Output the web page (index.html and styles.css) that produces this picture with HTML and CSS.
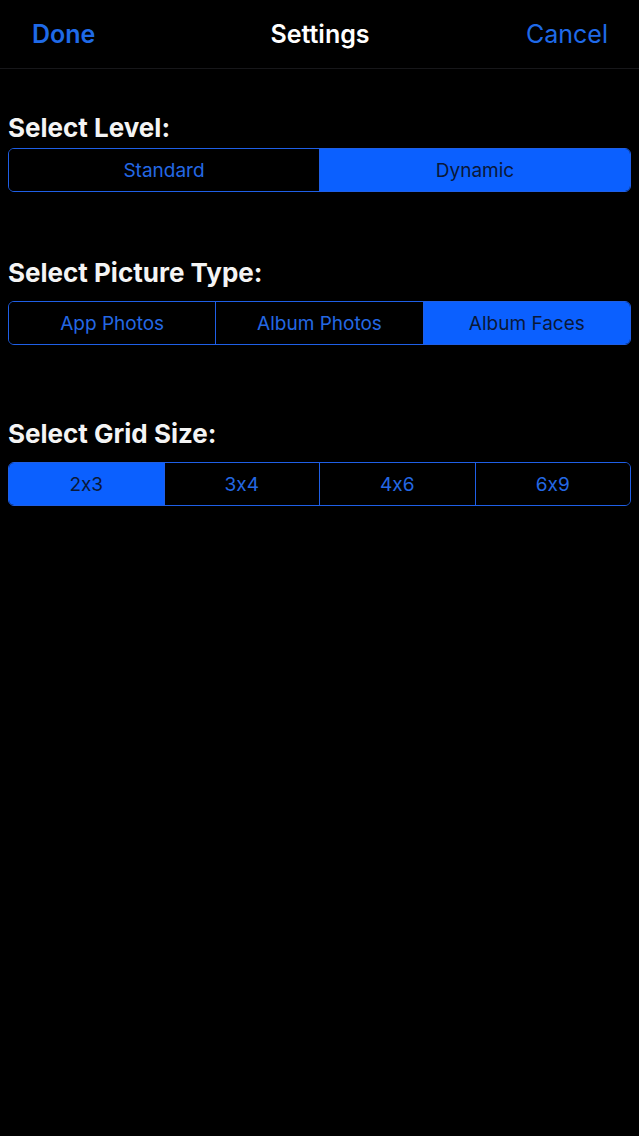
FILE: index.html
```html
<!doctype html>
<html lang="en">
 <head>
  <meta charset="UTF-8">
  <meta name="viewport" content="width=device-width, initial-scale=1.0">
  <title>Settings</title>
  <link rel="stylesheet" href="styles.css">
 </head>
 <body>
  <header class="navbar">
   <button class="nav-btn nav-done">Done</button>
   <h1 class="nav-title">Settings</h1>
   <button class="nav-btn nav-cancel">Cancel</button>
  </header>
  <main class="content">
   <section class="group group-level">
    <h2 class="group-label">Select Level:</h2>
    <div class="segmented">
     <button class="segment">Standard</button>
     <button class="segment selected">Dynamic</button>
    </div>
   </section>
   <section class="group group-type">
    <h2 class="group-label">Select Picture Type:</h2>
    <div class="segmented">
     <button class="segment">App Photos</button>
     <button class="segment">Album Photos</button>
     <button class="segment selected">Album Faces</button>
    </div>
   </section>
   <section class="group group-grid">
    <h2 class="group-label">Select Grid Size:</h2>
    <div class="segmented">
     <button class="segment selected">2x3</button>
     <button class="segment">3x4</button>
     <button class="segment">4x6</button>
     <button class="segment">6x9</button>
    </div>
   </section>
  </main>
 </body>
</html>
```

FILE: styles.css
```css
body {
    margin: 0;
    background-color: #000;
    color: #fff;
    font-family: Inter, "Liberation Sans", sans-serif;
    font-feature-settings: "calt" 0;
}
.navbar {
    height: 68px;
    display: grid;
    grid-template-columns: 1fr auto 1fr;
    align-items: center;
    padding: 0 31px 0 32px;
    border-bottom: 1px solid #17171a;
}
.nav-btn {
    background: none;
    border: none;
    padding: 0;
    font-family: inherit;
    font-feature-settings: inherit;
    font-size: 25px;
    color: #1f6ae8;
    cursor: pointer;
}
.nav-done {
    font-weight: 600;
    justify-self: start;
}
.nav-cancel {
    justify-self: end;
}
.nav-title {
    margin: 0;
    font-size: 25px;
    font-weight: 600;
    color: #fff;
}
.content {
    padding: 0 8px;
}
.group-label {
    margin: 0 0 13px;
    font-size: 26px;
    line-height: 30px;
    font-weight: 700;
    color: #f4f4f4;
}
.group-level {
    margin-top: 44px;
}
.group-level .group-label {
    margin-bottom: 5px;
}
.group-type {
    margin-top: 66px;
}
.group-grid {
    margin-top: 74px;
}
.segmented {
    display: flex;
    height: 44px;
    box-sizing: border-box;
    border: 1.5px solid #1f5fe6;
    border-radius: 6px;
    overflow: hidden;
}
.segment {
    flex: 1;
    background: #000;
    border: none;
    border-left: 1.5px solid #1f5fe6;
    font-family: inherit;
    font-feature-settings: inherit;
    font-size: 19px;
    color: #2468e4;
    padding: 0;
    cursor: pointer;
}
.segment:first-child {
    border-left: none;
}
.segment.selected {
    background: #0b60ff;
    color: #0a1838;
}
```
